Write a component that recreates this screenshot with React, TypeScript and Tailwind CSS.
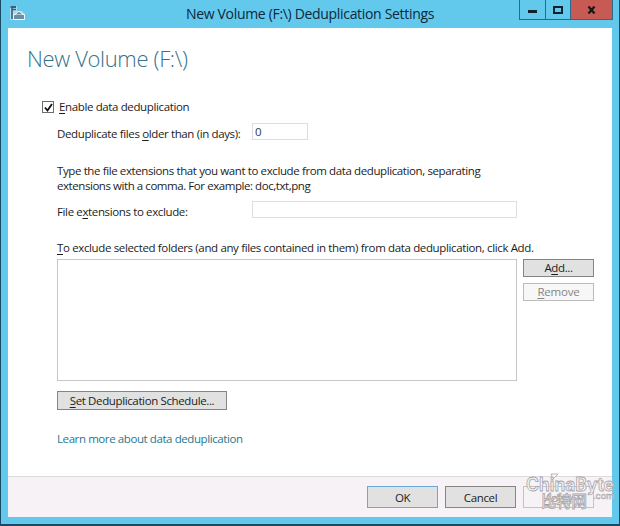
import React from 'react';

const ServerIcon: React.FC = () => (
  <svg className="h-[17px] w-[18px]" viewBox="0 0 18 17" fill="none">
    <path d="M1 1h7v5h5l3 3v6H1z" fill="#a9dcf2" />
    <path d="M1.500 2h5.500" stroke="#33627e" strokeWidth="2" />
    <path d="M3 4.500h4M3 3v11" stroke="#33627e" strokeWidth="1.600" />
    <path d="M4.500 9.500h11v5h-11z" fill="#6d8da0" stroke="#eef9fe" />
    <path d="M6.500 9.500q3.500-6 7 0" fill="#6d8da0" stroke="#eef9fe" />
  </svg>
);

// Caption buttons hang from the top edge of the window
const CaptionButtons: React.FC = () => (
  <div className="mr-[-1px] flex h-[20px] border-x border-b border-[#2c6a88]">
    <div className="flex w-[26px] items-center justify-center border-r border-[#2c6a88]">
      <div className="mt-[4px] h-[3px] w-[9px] bg-[#10222e]" />
    </div>
    <div className="flex w-[24px] items-center justify-center">
      <div className="h-[8px] w-[10px] border-2 border-[#10222e]" />
    </div>
    <div className="flex w-[42px] items-center justify-center border-l border-[#2c6a88] bg-[#c75a53]">
      <svg className="h-[8px] w-[9px]" viewBox="0 0 9 8">
        <path d="M1.500 0.500L7.500 7.500M7.500 0.500L1.500 7.500" stroke="#10161c" strokeWidth="2.2" />
      </svg>
    </div>
  </div>
);

const Key: React.FC<{ children: React.ReactNode }> = ({ children }) => (
  <span className="underline decoration-1 underline-offset-2">{children}</span>
);

const Watermark: React.FC = () => (
  <svg className="absolute top-[468px] left-[521px] h-[42px] w-[98px] tracking-normal" viewBox="0 0 98 42">
    <g fill="#fbf9fb" fillOpacity="0.9" stroke="#a6a4a8" strokeWidth="0.8">
      <path d="M29 6h7l-5 5z" />
      <text x="4" y="23" fontFamily="Inter, sans-serif" fontSize="18" fontWeight="600" textLength="88" lengthAdjust="spacingAndGlyphs">
        ChinaByte
      </text>
      <text x="19" y="39" fontFamily="Noto Sans CJK SC, sans-serif" fontSize="15.500" fontWeight="500" textLength="46">
        比特网
      </text>
      <text x="71" y="31" fontFamily="Inter, sans-serif" fontSize="9" strokeWidth="0.5" textLength="21" lengthAdjust="spacingAndGlyphs">
        .com
      </text>
    </g>
  </svg>
);

export default function App() {
  return (
    <div className="relative flex h-[526px] w-[620px] flex-col border-x border-b-2 border-[#194a66] bg-[#62c8ec] px-[7px] pb-[7px] font-['Open_Sans','Noto_Sans',sans-serif] text-[11.500px] tracking-[-0.37px] text-[#1c1c1c]">
      <header className="flex h-[28px] shrink-0 items-start">
        <div className="w-[93px] pt-[5px] pl-px">
          <ServerIcon />
        </div>
        <h1 className="flex-1 pt-[4px] text-center text-[14px] leading-[20px] tracking-[-0.32px] whitespace-nowrap text-[#0c2a3c]">
          New Volume (F:\) Deduplication Settings
        </h1>
        <CaptionButtons />
      </header>

      <main className="flex min-h-0 flex-1 flex-col bg-white">
        <h2 className="h-[70px] pt-[14px] pl-[19px] text-[22px] leading-[32px] font-light tracking-[-0.35px] text-[#34728a]">
          New Volume (F:\)
        </h2>

        <label className="flex h-[18px] items-center pl-[34px]">
          <span className="mr-[5px] flex h-[12px] w-[12px] items-center justify-center border border-[#6d6d6d] bg-white">
            <svg className="h-[9px] w-[9px]" viewBox="0 0 9 9" fill="none">
              <path d="M1 4.500l2.500 3L8 1" stroke="#111111" strokeWidth="1.800" />
            </svg>
          </span>
          <span><Key>E</Key>nable data deduplication</span>
        </label>

        <div className="flex flex-1 flex-col pl-[49px]">
          <div className="mt-[7px] flex h-[17px] items-center">
            <span className="w-[195px] pt-[4px] whitespace-nowrap">Deduplicate files <Key>o</Key>lder than (in days):</span>
            <div className="flex h-[17px] w-[56px] items-center border border-[#dedede] pl-[2px] text-[#1f3a50]">0</div>
          </div>

          <p className="mt-[23px] leading-[15px] tracking-[-0.39px] whitespace-nowrap">
            Type the file extensions that you want to exclude from data deduplication, separating
            <br />
            <span className="tracking-[-0.44px]">extensions with a comma. For example: doc,txt,png</span>
          </p>

          <div className="mt-[8px] flex h-[17px] items-center">
            <span className="w-[195px] pt-[4px]">File e<Key>x</Key>tensions to exclude:</span>
            <div className="h-[17px] w-[265px] border border-[#dedede]" />
          </div>

          <p className="mt-[22px] h-[19px] leading-[15px] tracking-[-0.36px] whitespace-nowrap">
            <Key>T</Key>o exclude selected folders (and any files contained in them) from data deduplication, click Add.
          </p>
          <div className="flex gap-[6px]">
            <div className="h-[122px] w-[460px] border border-[#c6c6c6]" />
            <div className="flex flex-col gap-[6px]">
              <button className="h-[18px] w-[71px] border border-[#858585] bg-[#e1e1e1] leading-[16px]">A<Key>d</Key>d...</button>
              <button className="h-[18px] w-[71px] border border-[#bcbcbc] bg-[#f7f7f7] leading-[16px] tracking-[-0.2px] text-[#858585]"><Key>R</Key>emove</button>
            </div>
          </div>

          <button className="mt-[10px] h-[19px] w-[170px] border border-[#858585] bg-[#e1e1e1] leading-[18px]">
            <Key>S</Key>et Deduplication Schedule...
          </button>
          <a className="mt-[20px] leading-[18px] tracking-[-0.41px] text-[#28778d]">Learn more about data deduplication</a>
        </div>

        <footer className="flex h-[41px] shrink-0 items-start justify-end gap-[7px] border-t border-[#dcdadc] bg-[#f6f2f6] pt-[9px] pr-[18px]">
          <button className="h-[22px] w-[71px] border border-[#66a9d6] bg-[#e1e1e1] pt-px">OK</button>
          <button className="h-[22px] w-[71px] border border-[#858585] bg-[#e1e1e1] pt-px">Cancel</button>
          <button className="h-[22px] w-[71px] border border-[#c4c2c4] bg-[#f6f3f6] pt-px text-[#9d9d9d]"><Key>A</Key>pply</button>
        </footer>
      </main>

      <Watermark />
    </div>
  );
}
